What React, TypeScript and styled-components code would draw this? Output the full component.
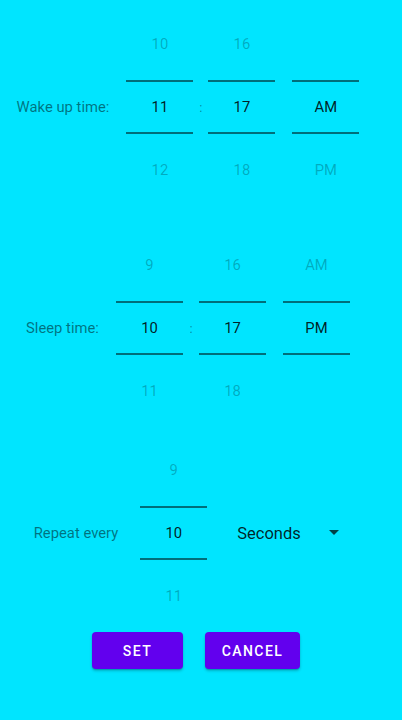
import React from "react";
import styled, { createGlobalStyle } from "styled-components";

const Global = createGlobalStyle`
  html, body { margin: 0; padding: 0; background: #00e5ff; }
  body { font-family: Roboto, "Noto Sans", Arial, sans-serif; }
  #root { min-height: 720px; background: #00e5ff; }
`;

const Page = styled.div`
  display: flex;
  flex-direction: column;
  padding-top: 8px;
  height: 720px;
  box-sizing: border-box;
`;

const Row = styled.div<{ $mt: number; $shift: number }>`
  display: flex;
  align-items: center;
  justify-content: center;
  margin-top: ${(p) => p.$mt}px;
  padding-right: ${(p) => p.$shift}px;
`;

const Label = styled.div<{ $gap: number }>`
  font-size: 14.8px;
  color: rgba(0, 0, 0, 0.5);
  margin-right: ${(p) => p.$gap}px;
  white-space: nowrap;
`;

const Picker = styled.div`
  width: 67px;
  display: flex;
  flex-direction: column;
`;

const Slot = styled.div`
  height: 72px;
  display: flex;
  align-items: center;
  justify-content: center;
  font-size: 14.8px;
  color: rgba(0, 0, 0, 0.26);
`;

const Current = styled.div`
  height: 50px;
  border-top: 2px solid rgba(0, 0, 0, 0.52);
  border-bottom: 2px solid rgba(0, 0, 0, 0.52);
  display: flex;
  align-items: center;
  justify-content: center;
  font-size: 14.8px;
  color: rgba(0, 0, 0, 0.87);
`;

const Colon = styled.div<{ $w: number }>`
  width: ${(p) => p.$w}px;
  text-align: center;
  font-size: 13px;
  color: rgba(0, 0, 0, 0.4);
`;

const Gap = styled.div<{ $w: number }>`
  width: ${(p) => p.$w}px;
`;

const Spinner = styled.div`
  display: flex;
  align-items: center;
  margin-left: 30px;
  width: 104px;
  justify-content: space-between;
`;

const SpinnerText = styled.div`
  font-size: 16.5px;
  color: rgba(0, 0, 0, 0.85);
`;

const Arrow = styled.div`
  width: 0;
  height: 0;
  border-left: 5px solid transparent;
  border-right: 5px solid transparent;
  border-top: 5px solid rgba(0, 0, 0, 0.72);
  margin-right: 2px;
  margin-top: -2px;
`;

const Buttons = styled.div`
  display: flex;
  justify-content: center;
  gap: 22px;
  padding-right: 10px;
`;

const Button = styled.button<{ $w: number }>`
  width: ${(p) => p.$w}px;
  height: 37px;
  border: none;
  border-radius: 4px;
  background: #6200ee;
  color: #fff;
  font-family: Roboto, "Noto Sans", Arial, sans-serif;
  font-weight: 500;
  font-size: 14px;
  letter-spacing: 1.4px;
  box-shadow: 0 2px 3px rgba(0, 0, 0, 0.22), 0 1px 1px rgba(0, 0, 0, 0.14);
  padding: 0;
`;

type Col = [string, string, string];

const Wheel = ({ v }: { v: Col }) => (
  <Picker>
    <Slot>{v[0]}</Slot>
    <Current>{v[1]}</Current>
    <Slot>{v[2]}</Slot>
  </Picker>
);

export default function App() {
  return (
    <>
      <Global />
      <Page>
        <Row $mt={0} $shift={26}>
          <Label $gap={17}>Wake up time:</Label>
          <Wheel v={["10", "11", "12"]} />
          <Colon $w={15}>:</Colon>
          <Wheel v={["16", "17", "18"]} />
          <Gap $w={17} />
          <Wheel v={["", "AM", "PM"]} />
        </Row>
        <Row $mt={23} $shift={26}>
          <Label $gap={17}>Sleep time:</Label>
          <Wheel v={["9", "10", "11"]} />
          <Colon $w={16}>:</Colon>
          <Wheel v={["16", "17", "18"]} />
          <Gap $w={17} />
          <Wheel v={["AM", "PM", ""]} />
        </Row>
        <Row $mt={7} $shift={27}>
          <Label $gap={22}>Repeat every</Label>
          <Wheel v={["9", "10", "11"]} />
          <Spinner>
            <SpinnerText>Seconds</SpinnerText>
            <Arrow />
          </Spinner>
        </Row>
        <Buttons>
          <Button $w={91}>SET</Button>
          <Button $w={95}>CANCEL</Button>
        </Buttons>
      </Page>
    </>
  );
}
